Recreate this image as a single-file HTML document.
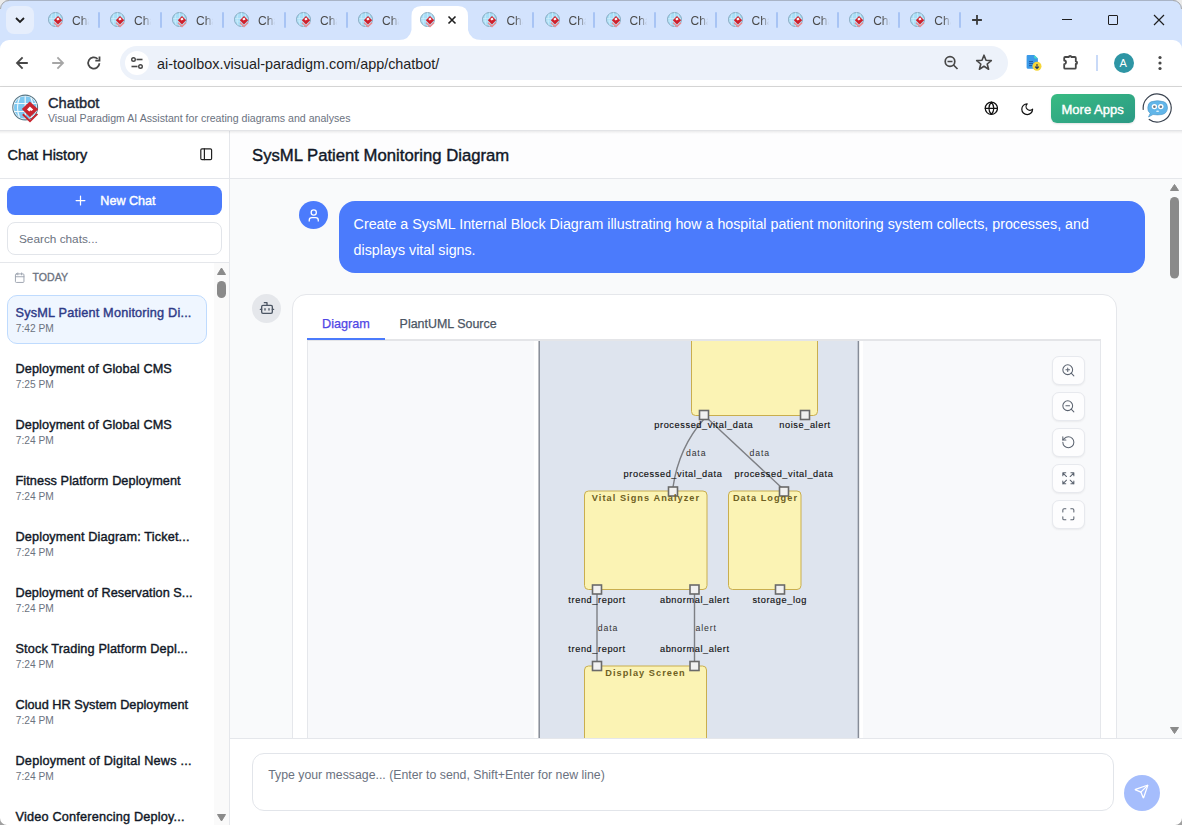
<!DOCTYPE html>
<html><head><meta charset="utf-8">
<style>
*{box-sizing:border-box;margin:0;padding:0}
html,body{width:1182px;height:825px;overflow:hidden;background:#fff;font-family:"Liberation Sans",sans-serif;position:relative}
.a{position:absolute}
.t{position:absolute;white-space:nowrap;line-height:1}
.sb{font-weight:400;-webkit-text-stroke:0.4px currentColor}
</style></head><body>
<div class="a" style="left:0;top:0;width:1182px;height:52px;background:#d3e3fd"></div>
<div class="a" style="left:0;top:0;width:1182px;height:1px;background:#a9b4c6"></div>
<div class="a" style="left:6px;top:6px;width:28px;height:28px;border-radius:8px;background:#e6eefc"></div>
<svg class="a" style="left:0;top:0" width="40" height="40"><path d="M16 18 L20 22 L24 18" stroke="#1f1f1f" stroke-width="1.8" fill="none"/></svg>
<svg class="a" style="left:398px;top:0" width="84" height="41"><path d="M1 40 Q11.5 40 13.5 30 L13.5 16 Q13.5 6 23.5 6 L60 6 Q70 6 70 16 L70 30 Q72 40 84 40 Z" fill="#fff"/></svg>
<svg class="a" style="left:48px;top:12px" width="16" height="16" viewBox="0 0 16 16">
<circle cx="7.5" cy="7.5" r="7" fill="#a9def7" stroke="#7fa3b8" stroke-width="0.9"/>
<path d="M1 6.5H14 M1 9H14 M7.5 0.5V14.5 M4 1.5Q2 7.5 4 13.5 M11 1.5Q13 7.5 11 13.5" stroke="#d6f0fb" stroke-width="0.6" fill="none"/>
<path d="M10 4 L14.2 8.2 L10 12.4 L5.8 8.2 Z" fill="#d0202c"/>
<path d="M6 10.8 L10 14.6 L14 10.8" stroke="#ec8a90" stroke-width="1.4" fill="none"/>
<path d="M8.3 7 L10.2 5.6 L11.6 7.2 L9.7 8.6 Z" fill="#fff"/>
</svg>
<div class="t" style="left:72px;top:15px;font-size:12px;color:#4a4a4a;width:17px;overflow:hidden;-webkit-mask-image:linear-gradient(90deg,#000 55%,transparent)">Chat</div>
<svg class="a" style="left:110px;top:12px" width="16" height="16" viewBox="0 0 16 16">
<circle cx="7.5" cy="7.5" r="7" fill="#a9def7" stroke="#7fa3b8" stroke-width="0.9"/>
<path d="M1 6.5H14 M1 9H14 M7.5 0.5V14.5 M4 1.5Q2 7.5 4 13.5 M11 1.5Q13 7.5 11 13.5" stroke="#d6f0fb" stroke-width="0.6" fill="none"/>
<path d="M10 4 L14.2 8.2 L10 12.4 L5.8 8.2 Z" fill="#d0202c"/>
<path d="M6 10.8 L10 14.6 L14 10.8" stroke="#ec8a90" stroke-width="1.4" fill="none"/>
<path d="M8.3 7 L10.2 5.6 L11.6 7.2 L9.7 8.6 Z" fill="#fff"/>
</svg>
<div class="t" style="left:134px;top:15px;font-size:12px;color:#4a4a4a;width:17px;overflow:hidden;-webkit-mask-image:linear-gradient(90deg,#000 55%,transparent)">Chat</div>
<svg class="a" style="left:172px;top:12px" width="16" height="16" viewBox="0 0 16 16">
<circle cx="7.5" cy="7.5" r="7" fill="#a9def7" stroke="#7fa3b8" stroke-width="0.9"/>
<path d="M1 6.5H14 M1 9H14 M7.5 0.5V14.5 M4 1.5Q2 7.5 4 13.5 M11 1.5Q13 7.5 11 13.5" stroke="#d6f0fb" stroke-width="0.6" fill="none"/>
<path d="M10 4 L14.2 8.2 L10 12.4 L5.8 8.2 Z" fill="#d0202c"/>
<path d="M6 10.8 L10 14.6 L14 10.8" stroke="#ec8a90" stroke-width="1.4" fill="none"/>
<path d="M8.3 7 L10.2 5.6 L11.6 7.2 L9.7 8.6 Z" fill="#fff"/>
</svg>
<div class="t" style="left:196px;top:15px;font-size:12px;color:#4a4a4a;width:17px;overflow:hidden;-webkit-mask-image:linear-gradient(90deg,#000 55%,transparent)">Chat</div>
<svg class="a" style="left:234px;top:12px" width="16" height="16" viewBox="0 0 16 16">
<circle cx="7.5" cy="7.5" r="7" fill="#a9def7" stroke="#7fa3b8" stroke-width="0.9"/>
<path d="M1 6.5H14 M1 9H14 M7.5 0.5V14.5 M4 1.5Q2 7.5 4 13.5 M11 1.5Q13 7.5 11 13.5" stroke="#d6f0fb" stroke-width="0.6" fill="none"/>
<path d="M10 4 L14.2 8.2 L10 12.4 L5.8 8.2 Z" fill="#d0202c"/>
<path d="M6 10.8 L10 14.6 L14 10.8" stroke="#ec8a90" stroke-width="1.4" fill="none"/>
<path d="M8.3 7 L10.2 5.6 L11.6 7.2 L9.7 8.6 Z" fill="#fff"/>
</svg>
<div class="t" style="left:258px;top:15px;font-size:12px;color:#4a4a4a;width:17px;overflow:hidden;-webkit-mask-image:linear-gradient(90deg,#000 55%,transparent)">Chat</div>
<svg class="a" style="left:296px;top:12px" width="16" height="16" viewBox="0 0 16 16">
<circle cx="7.5" cy="7.5" r="7" fill="#a9def7" stroke="#7fa3b8" stroke-width="0.9"/>
<path d="M1 6.5H14 M1 9H14 M7.5 0.5V14.5 M4 1.5Q2 7.5 4 13.5 M11 1.5Q13 7.5 11 13.5" stroke="#d6f0fb" stroke-width="0.6" fill="none"/>
<path d="M10 4 L14.2 8.2 L10 12.4 L5.8 8.2 Z" fill="#d0202c"/>
<path d="M6 10.8 L10 14.6 L14 10.8" stroke="#ec8a90" stroke-width="1.4" fill="none"/>
<path d="M8.3 7 L10.2 5.6 L11.6 7.2 L9.7 8.6 Z" fill="#fff"/>
</svg>
<div class="t" style="left:320px;top:15px;font-size:12px;color:#4a4a4a;width:17px;overflow:hidden;-webkit-mask-image:linear-gradient(90deg,#000 55%,transparent)">Chat</div>
<svg class="a" style="left:358px;top:12px" width="16" height="16" viewBox="0 0 16 16">
<circle cx="7.5" cy="7.5" r="7" fill="#a9def7" stroke="#7fa3b8" stroke-width="0.9"/>
<path d="M1 6.5H14 M1 9H14 M7.5 0.5V14.5 M4 1.5Q2 7.5 4 13.5 M11 1.5Q13 7.5 11 13.5" stroke="#d6f0fb" stroke-width="0.6" fill="none"/>
<path d="M10 4 L14.2 8.2 L10 12.4 L5.8 8.2 Z" fill="#d0202c"/>
<path d="M6 10.8 L10 14.6 L14 10.8" stroke="#ec8a90" stroke-width="1.4" fill="none"/>
<path d="M8.3 7 L10.2 5.6 L11.6 7.2 L9.7 8.6 Z" fill="#fff"/>
</svg>
<div class="t" style="left:382px;top:15px;font-size:12px;color:#4a4a4a;width:17px;overflow:hidden;-webkit-mask-image:linear-gradient(90deg,#000 55%,transparent)">Chat</div>
<svg class="a" style="left:420px;top:12px" width="16" height="16" viewBox="0 0 16 16">
<circle cx="7.5" cy="7.5" r="7" fill="#a9def7" stroke="#7fa3b8" stroke-width="0.9"/>
<path d="M1 6.5H14 M1 9H14 M7.5 0.5V14.5 M4 1.5Q2 7.5 4 13.5 M11 1.5Q13 7.5 11 13.5" stroke="#d6f0fb" stroke-width="0.6" fill="none"/>
<path d="M10 4 L14.2 8.2 L10 12.4 L5.8 8.2 Z" fill="#d0202c"/>
<path d="M6 10.8 L10 14.6 L14 10.8" stroke="#ec8a90" stroke-width="1.4" fill="none"/>
<path d="M8.3 7 L10.2 5.6 L11.6 7.2 L9.7 8.6 Z" fill="#fff"/>
</svg>
<svg class="a" style="left:482.4px;top:12px" width="16" height="16" viewBox="0 0 16 16">
<circle cx="7.5" cy="7.5" r="7" fill="#a9def7" stroke="#7fa3b8" stroke-width="0.9"/>
<path d="M1 6.5H14 M1 9H14 M7.5 0.5V14.5 M4 1.5Q2 7.5 4 13.5 M11 1.5Q13 7.5 11 13.5" stroke="#d6f0fb" stroke-width="0.6" fill="none"/>
<path d="M10 4 L14.2 8.2 L10 12.4 L5.8 8.2 Z" fill="#d0202c"/>
<path d="M6 10.8 L10 14.6 L14 10.8" stroke="#ec8a90" stroke-width="1.4" fill="none"/>
<path d="M8.3 7 L10.2 5.6 L11.6 7.2 L9.7 8.6 Z" fill="#fff"/>
</svg>
<div class="t" style="left:506.4px;top:15px;font-size:12px;color:#4a4a4a;width:17px;overflow:hidden;-webkit-mask-image:linear-gradient(90deg,#000 55%,transparent)">Chat</div>
<svg class="a" style="left:544.5px;top:12px" width="16" height="16" viewBox="0 0 16 16">
<circle cx="7.5" cy="7.5" r="7" fill="#a9def7" stroke="#7fa3b8" stroke-width="0.9"/>
<path d="M1 6.5H14 M1 9H14 M7.5 0.5V14.5 M4 1.5Q2 7.5 4 13.5 M11 1.5Q13 7.5 11 13.5" stroke="#d6f0fb" stroke-width="0.6" fill="none"/>
<path d="M10 4 L14.2 8.2 L10 12.4 L5.8 8.2 Z" fill="#d0202c"/>
<path d="M6 10.8 L10 14.6 L14 10.8" stroke="#ec8a90" stroke-width="1.4" fill="none"/>
<path d="M8.3 7 L10.2 5.6 L11.6 7.2 L9.7 8.6 Z" fill="#fff"/>
</svg>
<div class="t" style="left:568.5px;top:15px;font-size:12px;color:#4a4a4a;width:17px;overflow:hidden;-webkit-mask-image:linear-gradient(90deg,#000 55%,transparent)">Chat</div>
<svg class="a" style="left:605.5px;top:12px" width="16" height="16" viewBox="0 0 16 16">
<circle cx="7.5" cy="7.5" r="7" fill="#a9def7" stroke="#7fa3b8" stroke-width="0.9"/>
<path d="M1 6.5H14 M1 9H14 M7.5 0.5V14.5 M4 1.5Q2 7.5 4 13.5 M11 1.5Q13 7.5 11 13.5" stroke="#d6f0fb" stroke-width="0.6" fill="none"/>
<path d="M10 4 L14.2 8.2 L10 12.4 L5.8 8.2 Z" fill="#d0202c"/>
<path d="M6 10.8 L10 14.6 L14 10.8" stroke="#ec8a90" stroke-width="1.4" fill="none"/>
<path d="M8.3 7 L10.2 5.6 L11.6 7.2 L9.7 8.6 Z" fill="#fff"/>
</svg>
<div class="t" style="left:629.5px;top:15px;font-size:12px;color:#4a4a4a;width:17px;overflow:hidden;-webkit-mask-image:linear-gradient(90deg,#000 55%,transparent)">Chat</div>
<svg class="a" style="left:666.5px;top:12px" width="16" height="16" viewBox="0 0 16 16">
<circle cx="7.5" cy="7.5" r="7" fill="#a9def7" stroke="#7fa3b8" stroke-width="0.9"/>
<path d="M1 6.5H14 M1 9H14 M7.5 0.5V14.5 M4 1.5Q2 7.5 4 13.5 M11 1.5Q13 7.5 11 13.5" stroke="#d6f0fb" stroke-width="0.6" fill="none"/>
<path d="M10 4 L14.2 8.2 L10 12.4 L5.8 8.2 Z" fill="#d0202c"/>
<path d="M6 10.8 L10 14.6 L14 10.8" stroke="#ec8a90" stroke-width="1.4" fill="none"/>
<path d="M8.3 7 L10.2 5.6 L11.6 7.2 L9.7 8.6 Z" fill="#fff"/>
</svg>
<div class="t" style="left:690.5px;top:15px;font-size:12px;color:#4a4a4a;width:17px;overflow:hidden;-webkit-mask-image:linear-gradient(90deg,#000 55%,transparent)">Chat</div>
<svg class="a" style="left:727.5px;top:12px" width="16" height="16" viewBox="0 0 16 16">
<circle cx="7.5" cy="7.5" r="7" fill="#a9def7" stroke="#7fa3b8" stroke-width="0.9"/>
<path d="M1 6.5H14 M1 9H14 M7.5 0.5V14.5 M4 1.5Q2 7.5 4 13.5 M11 1.5Q13 7.5 11 13.5" stroke="#d6f0fb" stroke-width="0.6" fill="none"/>
<path d="M10 4 L14.2 8.2 L10 12.4 L5.8 8.2 Z" fill="#d0202c"/>
<path d="M6 10.8 L10 14.6 L14 10.8" stroke="#ec8a90" stroke-width="1.4" fill="none"/>
<path d="M8.3 7 L10.2 5.6 L11.6 7.2 L9.7 8.6 Z" fill="#fff"/>
</svg>
<div class="t" style="left:751.5px;top:15px;font-size:12px;color:#4a4a4a;width:17px;overflow:hidden;-webkit-mask-image:linear-gradient(90deg,#000 55%,transparent)">Chat</div>
<svg class="a" style="left:788.2px;top:12px" width="16" height="16" viewBox="0 0 16 16">
<circle cx="7.5" cy="7.5" r="7" fill="#a9def7" stroke="#7fa3b8" stroke-width="0.9"/>
<path d="M1 6.5H14 M1 9H14 M7.5 0.5V14.5 M4 1.5Q2 7.5 4 13.5 M11 1.5Q13 7.5 11 13.5" stroke="#d6f0fb" stroke-width="0.6" fill="none"/>
<path d="M10 4 L14.2 8.2 L10 12.4 L5.8 8.2 Z" fill="#d0202c"/>
<path d="M6 10.8 L10 14.6 L14 10.8" stroke="#ec8a90" stroke-width="1.4" fill="none"/>
<path d="M8.3 7 L10.2 5.6 L11.6 7.2 L9.7 8.6 Z" fill="#fff"/>
</svg>
<div class="t" style="left:812.2px;top:15px;font-size:12px;color:#4a4a4a;width:17px;overflow:hidden;-webkit-mask-image:linear-gradient(90deg,#000 55%,transparent)">Chat</div>
<svg class="a" style="left:849.2px;top:12px" width="16" height="16" viewBox="0 0 16 16">
<circle cx="7.5" cy="7.5" r="7" fill="#a9def7" stroke="#7fa3b8" stroke-width="0.9"/>
<path d="M1 6.5H14 M1 9H14 M7.5 0.5V14.5 M4 1.5Q2 7.5 4 13.5 M11 1.5Q13 7.5 11 13.5" stroke="#d6f0fb" stroke-width="0.6" fill="none"/>
<path d="M10 4 L14.2 8.2 L10 12.4 L5.8 8.2 Z" fill="#d0202c"/>
<path d="M6 10.8 L10 14.6 L14 10.8" stroke="#ec8a90" stroke-width="1.4" fill="none"/>
<path d="M8.3 7 L10.2 5.6 L11.6 7.2 L9.7 8.6 Z" fill="#fff"/>
</svg>
<div class="t" style="left:873.2px;top:15px;font-size:12px;color:#4a4a4a;width:17px;overflow:hidden;-webkit-mask-image:linear-gradient(90deg,#000 55%,transparent)">Chat</div>
<svg class="a" style="left:910.3px;top:12px" width="16" height="16" viewBox="0 0 16 16">
<circle cx="7.5" cy="7.5" r="7" fill="#a9def7" stroke="#7fa3b8" stroke-width="0.9"/>
<path d="M1 6.5H14 M1 9H14 M7.5 0.5V14.5 M4 1.5Q2 7.5 4 13.5 M11 1.5Q13 7.5 11 13.5" stroke="#d6f0fb" stroke-width="0.6" fill="none"/>
<path d="M10 4 L14.2 8.2 L10 12.4 L5.8 8.2 Z" fill="#d0202c"/>
<path d="M6 10.8 L10 14.6 L14 10.8" stroke="#ec8a90" stroke-width="1.4" fill="none"/>
<path d="M8.3 7 L10.2 5.6 L11.6 7.2 L9.7 8.6 Z" fill="#fff"/>
</svg>
<div class="t" style="left:934.3px;top:15px;font-size:12px;color:#4a4a4a;width:17px;overflow:hidden;-webkit-mask-image:linear-gradient(90deg,#000 55%,transparent)">Chat</div>
<svg class="a" style="left:444px;top:12px" width="16" height="16"><path d="M4.5 4.5L11.5 11.5M11.5 4.5L4.5 11.5" stroke="#1f1f1f" stroke-width="1.6"/></svg>
<div class="a" style="left:98px;top:12px;width:2px;height:16px;background:#a8c4f4;border-radius:1px"></div>
<div class="a" style="left:160px;top:12px;width:2px;height:16px;background:#a8c4f4;border-radius:1px"></div>
<div class="a" style="left:222px;top:12px;width:2px;height:16px;background:#a8c4f4;border-radius:1px"></div>
<div class="a" style="left:284px;top:12px;width:2px;height:16px;background:#a8c4f4;border-radius:1px"></div>
<div class="a" style="left:346px;top:12px;width:2px;height:16px;background:#a8c4f4;border-radius:1px"></div>
<div class="a" style="left:532px;top:12px;width:2px;height:16px;background:#a8c4f4;border-radius:1px"></div>
<div class="a" style="left:592.7px;top:12px;width:2px;height:16px;background:#a8c4f4;border-radius:1px"></div>
<div class="a" style="left:653.8px;top:12px;width:2px;height:16px;background:#a8c4f4;border-radius:1px"></div>
<div class="a" style="left:715px;top:12px;width:2px;height:16px;background:#a8c4f4;border-radius:1px"></div>
<div class="a" style="left:775.7px;top:12px;width:2px;height:16px;background:#a8c4f4;border-radius:1px"></div>
<div class="a" style="left:837px;top:12px;width:2px;height:16px;background:#a8c4f4;border-radius:1px"></div>
<div class="a" style="left:898px;top:12px;width:2px;height:16px;background:#a8c4f4;border-radius:1px"></div>
<div class="a" style="left:959px;top:12px;width:2px;height:16px;background:#a8c4f4;border-radius:1px"></div>
<svg class="a" style="left:969px;top:12px" width="16" height="16"><path d="M8 3V12.8M3.1 8H12.9" stroke="#3a3a3a" stroke-width="1.8"/></svg>
<div class="a" style="left:1062px;top:18.6px;width:10px;height:1.2px;background:#1f1f1f"></div>
<div class="a" style="left:1108px;top:15px;width:10px;height:10px;border:1.2px solid #1f1f1f;border-radius:1px"></div>
<svg class="a" style="left:1150px;top:11px" width="18" height="18"><path d="M4 4L14 14M14 4L4 14" stroke="#1f1f1f" stroke-width="1.2"/></svg>
<div class="a" style="left:0;top:40px;width:1182px;height:46px;background:#fff;border-radius:9px 9px 0 0"></div>
<div class="a" style="left:0;top:86px;width:1182px;height:1px;background:#d9d9d9"></div>
<svg class="a" style="left:0;top:40px" width="120" height="46"><path d="M27.8 23H17.2M22.6 17.4L17 23L22.6 28.6" stroke="#474747" stroke-width="1.8" fill="none"/><path d="M52.2 23H62.8M57.4 17.4L63 23L57.4 28.6" stroke="#a6a6a6" stroke-width="1.8" fill="none"/><path d="M99.4 23.2A5.6 5.6 0 1 1 97.6 18.8" stroke="#474747" stroke-width="1.8" fill="none"/><path d="M95.3 20.6H99.5V16.6" stroke="#474747" stroke-width="1.8" fill="none"/></svg>
<div class="a" style="left:120px;top:46px;width:888px;height:34px;border-radius:17px;background:#edf2fa"></div>
<div class="a" style="left:125px;top:51px;width:24px;height:24px;border-radius:12px;background:#fff"></div>
<svg class="a" style="left:125px;top:51px" width="24" height="24"><circle cx="8.5" cy="8.5" r="1.8" stroke="#474747" stroke-width="1.4" fill="none"/><path d="M11.5 8.5H17.5" stroke="#474747" stroke-width="1.6"/><circle cx="15.5" cy="15.5" r="1.8" stroke="#474747" stroke-width="1.4" fill="none"/><path d="M6.5 15.5H12.5" stroke="#474747" stroke-width="1.6"/></svg>
<div class="t" style="left:157px;top:56.5px;font-size:14.4px;color:#1f1f1f">ai-toolbox.visual-paradigm.com/app/chatbot/</div>
<svg class="a" style="left:940px;top:52px" width="80" height="22"><circle cx="10" cy="9.5" r="4.8" stroke="#474747" stroke-width="1.7" fill="none"/><path d="M7.5 9.5H12.5M13.5 13L17.5 17" stroke="#474747" stroke-width="1.7"/><path d="M44 3.2L46 8.3L51.3 8.6L47.2 12L48.6 17.2L44 14.3L39.4 17.2L40.8 12L36.7 8.6L42 8.3Z" stroke="#474747" stroke-width="1.6" fill="none" stroke-linejoin="round"/></svg>
<svg class="a" style="left:1024px;top:53px" width="20" height="20"><path d="M3.6 1.9H10.2L13.9 5.6V14.6Q13.9 15.7 12.8 15.7H3.6Q2.6 15.7 2.6 14.6V3Q2.6 1.9 3.6 1.9Z" fill="#3b9ae8"/><path d="M10.2 1.9L13.9 5.6H11.2Q10.2 5.6 10.2 4.6Z" fill="#46d9c2"/><path d="M5 8.6H9M5 10.6H9M5 12.6H8" stroke="#1d4f9c" stroke-width="0.9"/><circle cx="13" cy="13.3" r="4.5" fill="#f5d63a"/><path d="M13 10.9V15.4M11.1 13.6L13 15.5L14.9 13.6" stroke="#1f3561" stroke-width="1.1" fill="none"/></svg>
<svg class="a" style="left:1060px;top:50px" width="24" height="24"><path d="M5.2 7H8.9A1.2 1.2 0 0 1 11.3 7H14.8Q15.8 7 15.8 8V11.4A1.3 1.3 0 0 1 15.8 14V17.7Q15.8 18.7 14.8 18.7H5.2Q4.2 18.7 4.2 17.7V14.1A1.8 1.8 0 0 0 4.2 10.5V8Q4.2 7 5.2 7Z" stroke="#474747" stroke-width="1.8" fill="none" stroke-linejoin="round"/></svg>
<div class="a" style="left:1096px;top:55px;width:2px;height:15.5px;background:#c9daf8"></div>
<div class="a" style="left:1114px;top:53px;width:20px;height:20px;border-radius:50%;background:#2e95a4"></div>
<div class="t" style="left:1119.6px;top:58px;font-size:11px;color:#fff">A</div>
<svg class="a" style="left:1152px;top:53px" width="16" height="20"><circle cx="8" cy="4.5" r="1.6" fill="#474747"/><circle cx="8" cy="10" r="1.6" fill="#474747"/><circle cx="8" cy="15.5" r="1.6" fill="#474747"/></svg>
<div class="a" style="left:0;top:87px;width:1182px;height:44px;background:#fff;border-bottom:1px solid #e3e4e7;box-shadow:0 1px 4px rgba(0,0,0,0.09)"></div>
<svg class="a" style="left:8px;top:90px" width="36" height="36" viewBox="0 0 36 36">
<circle cx="17.2" cy="17.5" r="12.4" fill="#fff" stroke="#587786" stroke-width="1.1"/>
<circle cx="17.2" cy="17.5" r="11.2" fill="#7ec8f0"/>
<path d="M6 13.5H28.5M6 21.5H28.5M17.2 6.3V28.7M11.5 7.5Q7.5 17.5 11.5 27.5M22.9 7.5Q26.9 17.5 22.9 27.5" stroke="#eef8fd" stroke-width="1.2" fill="none"/>
<path d="M14.8 24.2L22 31.2L29.4 23.8" stroke="#c9252f" stroke-width="1.9" fill="none"/>
<path d="M21.8 11.4L30.2 19.3L22 27.2L13.8 19.1Z" fill="#c9252f"/>
<path d="M19 19.6L21.9 16.4L25.2 19.5L23.6 21.1L22.6 20.2L21.3 21.6Z" fill="#fff"/>
</svg>
<div class="t sb" style="left:48px;top:96px;font-size:14.7px;color:#1f2937">Chatbot</div>
<div class="t" style="left:48px;top:112.5px;font-size:10.6px;color:#6b7280">Visual Paradigm AI Assistant for creating diagrams and analyses</div>
<svg class="a" style="left:983.7px;top:100.9px" width="14.7" height="14.7" viewBox="0 0 24 24" stroke="#111" stroke-width="2" fill="none" stroke-linecap="round" stroke-linejoin="round"><circle cx="12" cy="12" r="10"/><path d="M12 2a14.5 14.5 0 0 0 0 20 14.5 14.5 0 0 0 0-20"/><path d="M2 12h20"/></svg>
<svg class="a" style="left:1019.8px;top:101.5px" width="14.4" height="14.4" viewBox="0 0 24 24" stroke="#111" stroke-width="2" fill="none" stroke-linecap="round" stroke-linejoin="round"><path d="M12 3a6 6 0 0 0 9 9 9 9 0 1 1-9-9Z"/></svg>
<div class="a" style="left:1051px;top:94px;width:84px;height:28.5px;border-radius:6px;background:linear-gradient(160deg,#38bb82,#2b9985);box-shadow:0 1px 2px rgba(0,0,0,0.12)"></div>
<div class="t sb" style="left:1061.5px;top:103px;font-size:13px;color:#fff">More Apps</div>
<svg class="a" style="left:1141.5px;top:93.2px" width="30" height="30" viewBox="0 0 30 30"><path d="M6.8 26.2A14 14 0 1 0 1.3 16.8" stroke="#3a4350" stroke-width="1.2" fill="none"/><path d="M9 8.8Q15.5 6.5 22 8.8Q25.5 10 25.5 15Q25 20.5 20 21.5Q15.5 22.3 11 21.5L6.5 24L8.2 20.3Q5.5 18.5 5.8 14.5Q6 10 9 8.8Z" fill="#62b6e9" stroke="#4a93c4" stroke-width="0.6"/><circle cx="12.4" cy="13.6" r="2.7" fill="#fff"/><circle cx="18.8" cy="13.6" r="2.7" fill="#fff"/><circle cx="12.4" cy="13.8" r="1.3" fill="#6b7680"/><circle cx="18.8" cy="13.8" r="1.3" fill="#6b7680"/><ellipse cx="15.6" cy="18.3" rx="1.6" ry="0.8" fill="#dff1fb"/></svg>
<div class="a" style="left:0;top:131px;width:230px;height:694px;background:#fff;border-right:1px solid #e5e7eb"></div>
<div class="t sb" style="left:7.5px;top:148px;font-size:14.5px;color:#111827">Chat History</div>
<svg class="a" style="left:198.8px;top:146.8px" width="14.4" height="14.4" viewBox="0 0 24 24" stroke="#222" stroke-width="2" fill="none" stroke-linecap="round" stroke-linejoin="round"><rect width="18" height="18" x="3" y="3" rx="2"/><path d="M9 3v18"/></svg>
<div class="a" style="left:0;top:178px;width:229px;height:1px;background:#e5e7eb"></div>
<div class="a" style="left:7px;top:186px;width:215px;height:29px;border-radius:8px;background:#4b7bfc"></div>
<svg class="a" style="left:72.5px;top:193.25px" width="15" height="15" viewBox="0 0 24 24" stroke="#fff" stroke-width="2" fill="none" stroke-linecap="round"><path d="M5 12h14M12 5v14"/></svg>
<div class="t sb" style="left:100.3px;top:195px;font-size:12.6px;color:#fff">New Chat</div>
<div class="a" style="left:7px;top:222px;width:215px;height:33px;border-radius:8px;border:1px solid #e2e5ea;background:#fff"></div>
<div class="t" style="left:19px;top:233.8px;font-size:11.8px;color:#6b7280">Search chats...</div>
<div class="a" style="left:0;top:262px;width:229px;height:1px;background:#e5e7eb"></div>
<div class="a" style="left:214px;top:263px;width:15px;height:562px;background:#fafafa"></div>
<svg class="a" style="left:214px;top:263px" width="15" height="562"><path d="M7.5 5L11.5 11.5H3.5Z" fill="#8a8a8a" stroke="#8a8a8a" stroke-linejoin="round"/><rect x="3" y="18" width="9" height="17" rx="4.5" fill="#8a8a8a"/><path d="M3.5 551.5H11.5L7.5 558Z" fill="#8a8a8a" stroke="#8a8a8a" stroke-linejoin="round"/></svg>
<svg class="a" style="left:13.55px;top:271.9px" width="11.4" height="11.4" viewBox="0 0 24 24" stroke="#9ca3af" stroke-width="2" fill="none" stroke-linecap="round" stroke-linejoin="round"><rect width="18" height="18" x="3" y="4" rx="2"/><path d="M16 2v4M8 2v4M3 10h18"/></svg>
<div class="t sb" style="left:32.5px;top:272px;font-size:10.6px;color:#6b7280;-webkit-text-stroke-width:0.3px">TODAY</div>
<div class="a" style="left:7px;top:295px;width:200px;height:49px;border-radius:10px;background:#eff6ff;border:1px solid #bfdbfe"></div>
<div class="t sb" style="left:15.5px;top:306.5px;font-size:12.7px;color:#2e3a87;letter-spacing:0.197px">SysML Patient Monitoring Di...</div>
<div class="t" style="left:15.8px;top:323.5px;font-size:10.2px;color:#6b7280">7:42 PM</div>
<div class="t sb" style="left:15.5px;top:362.5px;font-size:12.7px;color:#111827;letter-spacing:0.113px">Deployment of Global CMS</div>
<div class="t" style="left:15.8px;top:379.5px;font-size:10.2px;color:#6b7280">7:25 PM</div>
<div class="t sb" style="left:15.5px;top:418.5px;font-size:12.7px;color:#111827;letter-spacing:0.113px">Deployment of Global CMS</div>
<div class="t" style="left:15.8px;top:435.5px;font-size:10.2px;color:#6b7280">7:24 PM</div>
<div class="t sb" style="left:15.5px;top:474.5px;font-size:12.7px;color:#111827;letter-spacing:0.085px">Fitness Platform Deployment</div>
<div class="t" style="left:15.8px;top:491.5px;font-size:10.2px;color:#6b7280">7:24 PM</div>
<div class="t sb" style="left:15.5px;top:530.5px;font-size:12.7px;color:#111827;letter-spacing:0.143px">Deployment Diagram: Ticket...</div>
<div class="t" style="left:15.8px;top:547.5px;font-size:10.2px;color:#6b7280">7:24 PM</div>
<div class="t sb" style="left:15.5px;top:586.5px;font-size:12.7px;color:#111827;letter-spacing:0.048px">Deployment of Reservation S...</div>
<div class="t" style="left:15.8px;top:603.5px;font-size:10.2px;color:#6b7280">7:24 PM</div>
<div class="t sb" style="left:15.5px;top:642.5px;font-size:12.7px;color:#111827;letter-spacing:0.128px">Stock Trading Platform Depl...</div>
<div class="t" style="left:15.8px;top:659.5px;font-size:10.2px;color:#6b7280">7:24 PM</div>
<div class="t sb" style="left:15.5px;top:698.5px;font-size:12.7px;color:#111827;letter-spacing:0.020px">Cloud HR System Deployment</div>
<div class="t" style="left:15.8px;top:715.5px;font-size:10.2px;color:#6b7280">7:24 PM</div>
<div class="t sb" style="left:15.5px;top:754.5px;font-size:12.7px;color:#111827;letter-spacing:0.207px">Deployment of Digital News ...</div>
<div class="t" style="left:15.8px;top:771.5px;font-size:10.2px;color:#6b7280">7:24 PM</div>
<div class="t sb" style="left:15.5px;top:810.5px;font-size:12.7px;color:#111827;letter-spacing:0.193px">Video Conferencing Deploy...</div>
<div class="t" style="left:15.8px;top:827.5px;font-size:10.2px;color:#6b7280">7:24 PM</div>
<div class="a" style="left:230px;top:131px;width:952px;height:47px;background:#fdfdfe"></div>
<div class="a" style="left:230px;top:178px;width:952px;height:1px;background:#e5e7eb"></div>
<div class="t sb" style="left:252px;top:147.8px;font-size:16.7px;color:#111827">SysML Patient Monitoring Diagram</div>
<div class="a" style="left:230px;top:179px;width:952px;height:559px;background:#f9fafb"></div>
<svg class="a" style="left:1167px;top:179px" width="15" height="559"><path d="M7.5 5.5L11.5 11.5H3.5Z" fill="#8a8a8a" stroke="#8a8a8a" stroke-linejoin="round"/><rect x="3" y="18" width="9" height="81.5" rx="4.5" fill="#8a8a8a"/><path d="M3.5 548.5H11.5L7.5 554.5Z" fill="#8a8a8a" stroke="#8a8a8a" stroke-linejoin="round"/></svg>
<div class="a" style="left:299px;top:201px;width:29px;height:28px;border-radius:50%;background:#4b7bfc"></div>
<svg class="a" style="left:306.2px;top:207.5px" width="15.5" height="15.5" viewBox="0 0 24 24"><circle cx="12" cy="7" r="4" stroke="#fff" stroke-width="2" fill="none"/><path d="M19 21v-2a4 4 0 0 0-4-4H9a4 4 0 0 0-4 4v2" stroke="#fff" stroke-width="2" fill="none"/></svg>
<div class="a" style="left:339px;top:201px;width:806px;height:72px;border-radius:16px;background:#4b7bfc"></div>
<div class="a" style="left:353.6px;top:211px;width:780px;font-size:14.25px;line-height:26px;color:#fff;white-space:nowrap">Create a SysML Internal Block Diagram illustrating how a hospital patient monitoring system collects, processes, and<br>displays vital signs.</div>
<div class="a" style="left:252px;top:294px;width:29px;height:29px;border-radius:50%;background:#e5e7eb"></div>
<svg class="a" style="left:258.5px;top:300px" width="16" height="16" viewBox="0 0 24 24"><path d="M12 8V4H8M2 14h2M20 14h2M15 13v2M9 13v2" stroke="#4b5563" stroke-width="2" fill="none" stroke-linecap="round" stroke-linejoin="round"/><rect width="16" height="12" x="4" y="8" rx="2" stroke="#4b5563" stroke-width="2" fill="none"/></svg>
<div class="a" style="left:292px;top:294px;width:825px;height:600px;border-radius:14px;background:#fff;border:1px solid #e5e7eb"></div>
<div class="t" style="left:322px;top:317.6px;font-size:12.7px;color:#4f46e5;-webkit-text-stroke:0.25px #4f46e5">Diagram</div>
<div class="t" style="left:399.6px;top:317.6px;font-size:12.45px;color:#4b5563;-webkit-text-stroke:0.25px #4b5563">PlantUML Source</div>
<div class="a" style="left:307px;top:339px;width:794px;height:2px;background:#e4e5e8"></div>
<div class="a" style="left:307px;top:337.5px;width:78px;height:2px;background:#4b7bfc"></div>
<div class="a" style="left:307px;top:341px;width:794px;height:397px;background:#f8f9fb;border-left:1px solid #e5e7eb;border-right:1px solid #e5e7eb"></div>
<div class="a" style="left:308px;top:341px;width:792px;height:397px;overflow:hidden"><svg class="a" style="left:-308px;top:-341px" width="1182" height="825"><rect x="534" y="340" width="329" height="400" fill="#ffffff"/><rect x="539.2" y="300" width="319.2" height="500" fill="#dee4ee" stroke="#868c97" stroke-width="1.5"/><rect x="691.5" y="300" width="126" height="115.5" rx="4" fill="#fbf3b4" stroke="#c9ae4e" stroke-width="1"/><rect x="584.5" y="491" width="122.5" height="98.5" rx="4" fill="#fbf3b4" stroke="#c9ae4e" stroke-width="1"/><rect x="728.5" y="491" width="72.5" height="98.5" rx="4" fill="#fbf3b4" stroke="#c9ae4e" stroke-width="1"/><rect x="584.5" y="666" width="122" height="120" rx="4" fill="#fbf3b4" stroke="#c9ae4e" stroke-width="1"/><path d="M704 419 Q679 447 673 487" stroke="#7d7f84" stroke-width="1.4" fill="none"/><path d="M707 418 L782 488" stroke="#7d7f84" stroke-width="1.4" fill="none"/><path d="M597 594 V662" stroke="#7d7f84" stroke-width="1.4" fill="none"/><path d="M694.5 594 V662" stroke="#7d7f84" stroke-width="1.4" fill="none"/><rect x="699.5" y="410.5" width="9" height="9" fill="#f1f1f1" stroke="#6a6a6a" stroke-width="1.6"/><rect x="800.5" y="410.5" width="9" height="9" fill="#f1f1f1" stroke="#6a6a6a" stroke-width="1.6"/><rect x="668.5" y="487.0" width="9" height="9" fill="#f1f1f1" stroke="#6a6a6a" stroke-width="1.6"/><rect x="779.5" y="487.0" width="9" height="9" fill="#f1f1f1" stroke="#6a6a6a" stroke-width="1.6"/><rect x="592.5" y="585.0" width="9" height="9" fill="#f1f1f1" stroke="#6a6a6a" stroke-width="1.6"/><rect x="690.0" y="585.0" width="9" height="9" fill="#f1f1f1" stroke="#6a6a6a" stroke-width="1.6"/><rect x="775.5" y="585.0" width="9" height="9" fill="#f1f1f1" stroke="#6a6a6a" stroke-width="1.6"/><rect x="592.5" y="661.5" width="9" height="9" fill="#f1f1f1" stroke="#6a6a6a" stroke-width="1.6"/><rect x="690.0" y="661.5" width="9" height="9" fill="#f1f1f1" stroke="#6a6a6a" stroke-width="1.6"/><text x="646" y="501.3" font-family="Liberation Sans" font-weight="700" font-size="9.2" fill="#6e5f22" text-anchor="middle" letter-spacing="1.05">Vital Signs Analyzer</text><text x="765.5" y="501.3" font-family="Liberation Sans" font-weight="700" font-size="9.2" fill="#6e5f22" text-anchor="middle" letter-spacing="1.05">Data Logger</text><text x="645.5" y="676" font-family="Liberation Sans" font-weight="700" font-size="9.2" fill="#6e5f22" text-anchor="middle" letter-spacing="1.05">Display Screen</text><text x="703.7" y="428.2" font-family="Liberation Sans" font-size="9.2" fill="#111" text-anchor="middle" letter-spacing="0.6" stroke="#111" stroke-width="0.15">processed_vital_data</text><text x="805" y="428.2" font-family="Liberation Sans" font-size="9.2" fill="#111" text-anchor="middle" letter-spacing="0.6" stroke="#111" stroke-width="0.15">noise_alert</text><text x="673" y="476.8" font-family="Liberation Sans" font-size="9.2" fill="#111" text-anchor="middle" letter-spacing="0.6" stroke="#111" stroke-width="0.15">processed_vital_data</text><text x="784" y="476.8" font-family="Liberation Sans" font-size="9.2" fill="#111" text-anchor="middle" letter-spacing="0.6" stroke="#111" stroke-width="0.15">processed_vital_data</text><text x="597" y="602.7" font-family="Liberation Sans" font-size="9.2" fill="#111" text-anchor="middle" letter-spacing="0.6" stroke="#111" stroke-width="0.15">trend_report</text><text x="694.8" y="602.7" font-family="Liberation Sans" font-size="9.2" fill="#111" text-anchor="middle" letter-spacing="0.6" stroke="#111" stroke-width="0.15">abnormal_alert</text><text x="779.7" y="602.7" font-family="Liberation Sans" font-size="9.2" fill="#111" text-anchor="middle" letter-spacing="0.6" stroke="#111" stroke-width="0.15">storage_log</text><text x="597" y="651.8" font-family="Liberation Sans" font-size="9.2" fill="#111" text-anchor="middle" letter-spacing="0.6" stroke="#111" stroke-width="0.15">trend_report</text><text x="694.8" y="651.8" font-family="Liberation Sans" font-size="9.2" fill="#111" text-anchor="middle" letter-spacing="0.6" stroke="#111" stroke-width="0.15">abnormal_alert</text><text x="686" y="455.6" font-family="Liberation Sans" font-size="8.7" fill="#333" letter-spacing="0.85">data</text><text x="749.6" y="455.6" font-family="Liberation Sans" font-size="8.7" fill="#333" letter-spacing="0.85">data</text><text x="597.8" y="630.8" font-family="Liberation Sans" font-size="8.7" fill="#333" letter-spacing="0.85">data</text><text x="695.5" y="630.8" font-family="Liberation Sans" font-size="8.7" fill="#333" letter-spacing="0.85">alert</text></svg></div>
<div class="a" style="left:1052px;top:356px;width:33px;height:28.5px;border-radius:7px;background:#fdfdfe;border:1px solid #e7e9ee;box-shadow:0 1px 2px rgba(0,0,0,0.06)"></div>
<svg class="a" style="left:1061.15px;top:362.9px" width="14.7" height="14.7" viewBox="0 0 24 24" stroke="#5b6370" stroke-width="1.7" fill="none" stroke-linecap="round" stroke-linejoin="round"><circle cx="11" cy="11" r="8"/><path d="m21 21-4.35-4.35M11 8v6M8 11h6"/></svg>
<div class="a" style="left:1052px;top:392px;width:33px;height:28.5px;border-radius:7px;background:#fdfdfe;border:1px solid #e7e9ee;box-shadow:0 1px 2px rgba(0,0,0,0.06)"></div>
<svg class="a" style="left:1061.15px;top:398.9px" width="14.7" height="14.7" viewBox="0 0 24 24" stroke="#5b6370" stroke-width="1.7" fill="none" stroke-linecap="round" stroke-linejoin="round"><circle cx="11" cy="11" r="8"/><path d="m21 21-4.35-4.35M8 11h6"/></svg>
<div class="a" style="left:1052px;top:428px;width:33px;height:28.5px;border-radius:7px;background:#fdfdfe;border:1px solid #e7e9ee;box-shadow:0 1px 2px rgba(0,0,0,0.06)"></div>
<svg class="a" style="left:1061.15px;top:434.9px" width="14.7" height="14.7" viewBox="0 0 24 24" stroke="#5b6370" stroke-width="1.7" fill="none" stroke-linecap="round" stroke-linejoin="round"><path d="M3 12a9 9 0 1 0 9-9 9.75 9.75 0 0 0-6.74 2.74L3 8"/><path d="M3 3v5h5"/></svg>
<div class="a" style="left:1052px;top:464px;width:33px;height:28.5px;border-radius:7px;background:#fdfdfe;border:1px solid #e7e9ee;box-shadow:0 1px 2px rgba(0,0,0,0.06)"></div>
<svg class="a" style="left:1061.15px;top:470.9px" width="14.7" height="14.7" viewBox="0 0 24 24" stroke="#5b6370" stroke-width="1.7" fill="none" stroke-linecap="round" stroke-linejoin="round"><path d="m21 21-6-6m6 6v-4.8m0 4.8h-4.8M3 16.2V21m0 0h4.8M3 21l6-6M21 7.8V3m0 0h-4.8M21 3l-6 6M3 7.8V3m0 0h4.8M3 3l6 6"/></svg>
<div class="a" style="left:1052px;top:500px;width:33px;height:28.5px;border-radius:7px;background:#fdfdfe;border:1px solid #e7e9ee;box-shadow:0 1px 2px rgba(0,0,0,0.06)"></div>
<svg class="a" style="left:1061.15px;top:506.9px" width="14.7" height="14.7" viewBox="0 0 24 24" stroke="#5b6370" stroke-width="1.7" fill="none" stroke-linecap="round" stroke-linejoin="round"><path d="M8 3H5a2 2 0 0 0-2 2v3m18 0V5a2 2 0 0 0-2-2h-3m0 18h3a2 2 0 0 0 2-2v-3M3 16v3a2 2 0 0 0 2 2h3"/></svg>
<div class="a" style="left:230px;top:738px;width:952px;height:87px;background:#fff;border-top:1px solid #e5e7eb"></div>
<div class="a" style="left:252px;top:753px;width:862px;height:58px;border-radius:12px;border:1px solid #e2e5ea;background:#fff"></div>
<div class="t" style="left:268.2px;top:769px;font-size:12.3px;color:#6b7280">Type your message... (Enter to send, Shift+Enter for new line)</div>
<div class="a" style="left:1124px;top:775px;width:36px;height:36px;border-radius:50%;background:#a5bdfc"></div>
<svg class="a" style="left:1134px;top:784px" width="15" height="15" viewBox="0 0 24 24" stroke="#fff" stroke-width="2" fill="none" stroke-linecap="round" stroke-linejoin="round"><path d="M14.536 21.686a.5.5 0 0 0 .937-.024l6.5-19a.496.496 0 0 0-.635-.635l-19 6.5a.5.5 0 0 0-.024.937l7.93 3.18a2 2 0 0 1 1.112 1.11z"/><path d="m21.854 2.147-10.94 10.939"/></svg>
<div class="a" style="left:0;top:131px;width:1182px;height:3px;background:linear-gradient(rgba(0,0,0,0.07),rgba(0,0,0,0))"></div>
<svg class="a" style="left:0;top:0" width="12" height="12"><path d="M0 0H9A9 9 0 0 0 0 9Z" fill="#ebebeb"/><path d="M9 0.5A8.5 8.5 0 0 0 0.5 9" stroke="#a9a9a9" fill="none"/></svg><svg class="a" style="left:1170px;top:0" width="12" height="12"><path d="M12 0H3A9 9 0 0 1 12 9Z" fill="#ebebeb"/><path d="M3 0.5A8.5 8.5 0 0 1 11.5 9" stroke="#a9a9a9" fill="none"/></svg><svg class="a" style="left:0;top:815px" width="10" height="10"><path d="M0 10V3A7 7 0 0 0 7 10Z" fill="#a0a0a0"/></svg><svg class="a" style="left:1172px;top:815px" width="10" height="10"><path d="M10 10V3A7 7 0 0 1 3 10Z" fill="#a0a0a0"/></svg>
</body></html>
